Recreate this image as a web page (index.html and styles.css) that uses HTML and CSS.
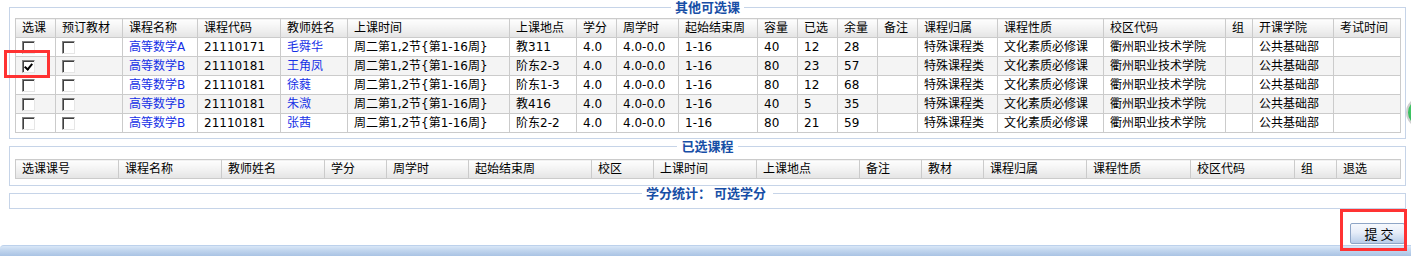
FILE: index.html
```html
<!DOCTYPE html>
<html lang="zh-CN">
<head>
<meta charset="utf-8">
<title>选课</title>
<link rel="stylesheet" href="styles.css">
</head>
<body>
<fieldset class="panel panel-avail">
  <legend>其他可选课</legend>
  <table class="grid">
    <colgroup>
      <col style="width:40px"><col style="width:67px"><col style="width:75px"><col style="width:83px"><col style="width:67px"><col style="width:162px"><col style="width:67px"><col style="width:40px"><col style="width:62px"><col style="width:79px"><col style="width:40px"><col style="width:40px"><col style="width:40px"><col style="width:40px"><col style="width:80px"><col style="width:106px"><col style="width:122px"><col style="width:27px"><col style="width:81px"><col style="width:67px">
    </colgroup>
    <thead>
      <tr><th>选课</th><th>预订教材</th><th>课程名称</th><th>课程代码</th><th>教师姓名</th><th>上课时间</th><th>上课地点</th><th>学分</th><th>周学时</th><th>起始结束周</th><th>容量</th><th>已选</th><th>余量</th><th>备注</th><th>课程归属</th><th>课程性质</th><th>校区代码</th><th>组</th><th>开课学院</th><th>考试时间</th></tr>
    </thead>
    <tbody>
      <tr><td><input type="checkbox" class="cb"></td><td><input type="checkbox" class="cb"></td><td class="link">高等数学A</td><td>21110171</td><td class="link">毛舜华</td><td>周二第1,2节{第1-16周}</td><td>教311</td><td>4.0</td><td>4.0-0.0</td><td>1-16</td><td>40</td><td>12</td><td>28</td><td></td><td>特殊课程类</td><td>文化素质必修课</td><td>衢州职业技术学院</td><td></td><td>公共基础部</td><td></td></tr>
      <tr><td><input type="checkbox" class="cb" checked></td><td><input type="checkbox" class="cb"></td><td class="link">高等数学B</td><td>21110181</td><td class="link">王角凤</td><td>周二第1,2节{第1-16周}</td><td>阶东2-3</td><td>4.0</td><td>4.0-0.0</td><td>1-16</td><td>80</td><td>23</td><td>57</td><td></td><td>特殊课程类</td><td>文化素质必修课</td><td>衢州职业技术学院</td><td></td><td>公共基础部</td><td></td></tr>
      <tr><td><input type="checkbox" class="cb"></td><td><input type="checkbox" class="cb"></td><td class="link">高等数学B</td><td>21110181</td><td class="link">徐蕤</td><td>周二第1,2节{第1-16周}</td><td>阶东1-3</td><td>4.0</td><td>4.0-0.0</td><td>1-16</td><td>80</td><td>12</td><td>68</td><td></td><td>特殊课程类</td><td>文化素质必修课</td><td>衢州职业技术学院</td><td></td><td>公共基础部</td><td></td></tr>
      <tr><td><input type="checkbox" class="cb"></td><td><input type="checkbox" class="cb"></td><td class="link">高等数学B</td><td>21110181</td><td class="link">朱溦</td><td>周二第1,2节{第1-16周}</td><td>教416</td><td>4.0</td><td>4.0-0.0</td><td>1-16</td><td>40</td><td>5</td><td>35</td><td></td><td>特殊课程类</td><td>文化素质必修课</td><td>衢州职业技术学院</td><td></td><td>公共基础部</td><td></td></tr>
      <tr><td><input type="checkbox" class="cb"></td><td><input type="checkbox" class="cb"></td><td class="link">高等数学B</td><td>21110181</td><td class="link">张茜</td><td>周二第1,2节{第1-16周}</td><td>阶东2-2</td><td>4.0</td><td>4.0-0.0</td><td>1-16</td><td>80</td><td>21</td><td>59</td><td></td><td>特殊课程类</td><td>文化素质必修课</td><td>衢州职业技术学院</td><td></td><td>公共基础部</td><td></td></tr>
    </tbody>
  </table>
</fieldset>

<fieldset class="panel panel-chosen">
  <legend>已选课程</legend>
  <table class="grid">
    <colgroup>
      <col style="width:103px"><col style="width:103px"><col style="width:103px"><col style="width:62px"><col style="width:82px"><col style="width:123px"><col style="width:62px"><col style="width:103px"><col style="width:103px"><col style="width:62px"><col style="width:62px"><col style="width:103px"><col style="width:104px"><col style="width:104px"><col style="width:42px"><col style="width:64px">
    </colgroup>
    <thead>
      <tr><th>选课课号</th><th>课程名称</th><th>教师姓名</th><th>学分</th><th>周学时</th><th>起始结束周</th><th>校区</th><th>上课时间</th><th>上课地点</th><th>备注</th><th>教材</th><th>课程归属</th><th>课程性质</th><th>校区代码</th><th>组</th><th>退选</th></tr>
    </thead>
  </table>
</fieldset>

<fieldset class="panel panel-credit">
  <legend>学分统计： 可选学分&nbsp;</legend>
</fieldset>

<div class="actions">
  <button type="button" class="submit">提交</button>
</div>

<div class="footbar"></div>

<div class="float-btn"></div>
<div class="mark mark-check"></div>
<div class="mark mark-submit"></div>
</body>
</html>
```

FILE: styles.css
```css
html, body {
  margin: 0;
  padding: 0;
  overflow: hidden;
  background: #fff;
}

body {
  position: relative;
  width: 1411px;
  height: 258px;
  padding-top: 1px;
  box-sizing: border-box;
  font: 12px "DejaVu Sans", "Noto Sans CJK SC", sans-serif;
  color: #000;
}

.panel {
  border: 1px solid #c6d4e8;
  margin: 0 5px 0 9px;
  padding: 5px 5px 5px;
  min-inline-size: 0;
}

.panel legend {
  margin: 0 auto;
  padding: 0 4px;
  font: bold 13px/12px "Noto Sans CJK SC", sans-serif;
  color: #174ea6;
}

.panel-chosen {
  margin-top: 1px;
  padding: 7px 5px 6px;
}

.panel-credit {
  margin-top: 1px;
  padding: 0 5px 9px;
}

.grid {
  border-collapse: collapse;
  table-layout: fixed;
  width: 1385px;
}

.grid th,
.grid td {
  border: 1px solid #cbcbcb;
  padding: 0 0 0 6px;
  line-height: 18px;
  text-align: left;
  font-weight: normal;
  white-space: nowrap;
  overflow: hidden;
  vertical-align: middle;
}

.grid th {
  background: linear-gradient(#fefefe, #f1f1f1 55%, #e4e4e4);
}

.grid tbody tr:nth-child(even) td {
  background: #f4f4f4;
}

.grid .link {
  color: #1530e6;
}

.cb {
  appearance: none;
  -webkit-appearance: none;
  display: block;
  position: relative;
  width: 13px;
  height: 13px;
  margin: 0;
  box-sizing: border-box;
  background: #fff;
  border: 1px solid;
  border-color: #808080 #e6e6e6 #e6e6e6 #808080;
  box-shadow: inset 1px 1px 0 #404040;
}

.cb:checked::after {
  content: "";
  position: absolute;
  left: 3px;
  top: 1px;
  width: 3px;
  height: 6px;
  border: solid #000;
  border-width: 0 2px 2px 0;
  transform: rotate(40deg);
}

.actions {
  display: flex;
  justify-content: flex-end;
  padding-right: 6px;
  margin-top: 14px;
}

.submit {
  width: 55px;
  height: 21px;
  box-sizing: border-box;
  border: 1px solid #8ea5c6;
  border-radius: 2px;
  background: linear-gradient(#f7f9fd, #e6edf8 45%, #c9d9ee 80%, #b8cce8);
  font: 13px/1 "Noto Sans CJK SC", sans-serif;
  letter-spacing: 3px;
  padding: 0 0 0 6px;
  color: #000;
}

.footbar {
  margin-top: 1px;
  height: 10px;
  border-top: 1px solid #bcd1ec;
  border-top-left-radius: 4px;
  background: linear-gradient(#d9e7f7, #c3d7ef 40%, #a9c3e4);
}

.float-btn {
  position: absolute;
  left: 1406px;
  top: 97px;
  width: 31px;
  height: 31px;
  box-sizing: border-box;
  border-radius: 50%;
  border: 2px solid #cfcfcf;
  background: radial-gradient(circle at 40% 40%, #57d878, #17a443);
}

.mark {
  position: absolute;
  box-sizing: border-box;
  border: 3px solid #ff3232;
  pointer-events: none;
}

.mark-check {
  left: 4px;
  top: 50px;
  width: 46px;
  height: 28px;
}

.mark-submit {
  left: 1340px;
  top: 209px;
  width: 67px;
  height: 42px;
}
```
